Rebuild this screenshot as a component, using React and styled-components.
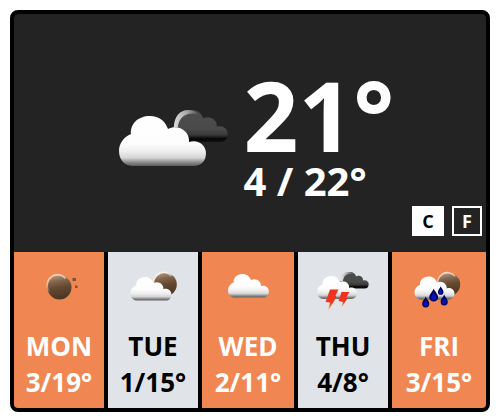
import React, { useId } from "react";
import styled, { createGlobalStyle } from "styled-components";

const GlobalStyle = createGlobalStyle`
  *, *::before, *::after { box-sizing: border-box; }
  body {
    margin: 0;
    background: #fff;
    font-family: "Open Sans", "Noto Sans", sans-serif;
    font-weight: 700;
  }
`;

const Page = styled.main`
  padding: 10px 8px 8px 10px;
`;

const Widget = styled.article`
  border: 4px solid #000;
  border-radius: 8px;
  background: #000;
  overflow: hidden;
`;

const Today = styled.section`
  display: flex;
  flex-direction: column;
  padding: 60px 4px 16px;
  background: #232323;
  color: #fff;
  border-radius: 4px 4px 0 0;
`;

const Current = styled.div`
  display: flex;
  justify-content: center;
  gap: 14px;
  padding-left: 12px;
`;

const CurrentIcon = styled.svg`
  width: 112px;
  height: 64px;
  margin-top: 32px;
  flex: none;
`;

const Temperature = styled.p`
  margin: 0;
  font-size: 96px;
  line-height: 82px;
`;

const Range = styled.p`
  margin: 0;
  font-size: 40px;
  line-height: 50px;
`;

const Units = styled.div`
  display: flex;
  justify-content: flex-end;
  gap: 8px;
`;

const UnitButton = styled.button`
  width: ${(p) => (p.$active ? 32 : 30)}px;
  height: 30px;
  padding: 0;
  border: 2px solid #fff;
  background: ${(p) => (p.$active ? "#fff" : "transparent")};
  color: ${(p) => (p.$active ? "#000" : "#fff")};
  font: inherit;
  font-size: 18px;
  line-height: 24px;
  cursor: pointer;
`;

const Forecast = styled.ul`
  display: grid;
  grid-template-columns: 90fr 90fr 92fr 90fr 94fr;
  gap: 4px;
  margin: 0;
  padding: 0;
  list-style: none;
`;

const Day = styled.li`
  display: flex;
  flex-direction: column;
  align-items: center;
  padding: 14px 0 8px;
  background: ${(p) => (p.$warm ? "#f08752" : "#e0e3e8")};
  color: ${(p) => (p.$warm ? "#fff" : "#000")};
  font-size: 26px;
  line-height: 36px;
  white-space: nowrap;
`;

const DayIcon = styled.svg`
  width: 60px;
  height: 50px;
  margin-bottom: 12px;
`;

const CLOUD =
  "M14 50C6 50 0 44 0 35C0 27 5 21 12 18C11 8 19 0 31 0C40 0 46 5 49 13C59 8 71 15 70 26C79 23 87 29 87 37C87 45 82 50 75 50Z";

function Cloud({ x, y, scale }) {
  const id = useId();
  return (
    <g transform={`translate(${x} ${y}) scale(${scale})`}>
      <linearGradient id={id} x1="0" y1="0" x2="0" y2="1">
        <stop offset="0" stopColor="#fff" />
        <stop offset="0.55" stopColor="#fdfdfd" />
        <stop offset="0.72" stopColor="#ececec" />
        <stop offset="0.84" stopColor="#d4d4d4" />
        <stop offset="0.92" stopColor="#909090" />
        <stop offset="1" stopColor="#5c5c5c" />
      </linearGradient>
      <path d={CLOUD} fill={`url(#${id})`} />
    </g>
  );
}

function DarkCloud({ x, y, scale }) {
  const id = useId();
  return (
    <g transform={`translate(${x} ${y}) scale(${scale})`}>
      <linearGradient id={id} x1="0" y1="0" x2="0" y2="1">
        <stop offset="0" stopColor="#4d4d4d" />
        <stop offset="0.6" stopColor="#4a4a4a" />
        <stop offset="0.78" stopColor="#383838" />
        <stop offset="0.9" stopColor="#050505" />
        <stop offset="1" stopColor="#111" />
      </linearGradient>
      <linearGradient id={`${id}-rim`} x1="0" y1="0" x2="1" y2="0">
        <stop offset="0" stopColor="#ddd" />
        <stop offset="0.5" stopColor="#aaa" />
        <stop offset="1" stopColor="#555" />
      </linearGradient>
      <path d={CLOUD} fill={`url(#${id})`} />
      <path
        d="M3 27C3 10 13 0 25 0C32 0 37 2 41 7C25 2 11 10 9 27Z"
        fill={`url(#${id}-rim)`}
      />
    </g>
  );
}

function Moon({ cx, cy, r }) {
  const id = useId();
  return (
    <g>
      <linearGradient id={id} x1="0.35" y1="0" x2="0.55" y2="1">
        <stop offset="0" stopColor="#b0957e" />
        <stop offset="0.25" stopColor="#80644d" />
        <stop offset="0.5" stopColor="#65492f" />
        <stop offset="1" stopColor="#4b3424" />
      </linearGradient>
      <linearGradient id={`${id}-rim`} x1="0.3" y1="0" x2="0.5" y2="1">
        <stop offset="0" stopColor="#fff3e6" stopOpacity="0.8" />
        <stop offset="1" stopColor="#fff3e6" stopOpacity="0.1" />
      </linearGradient>
      <circle cx={cx} cy={cy} r={r} fill={`url(#${id})`} />
      <path
        d={`M${cx - r + 2} ${cy + 4}A${r - 2} ${r - 2} 0 0 1 ${cx + 6} ${cy - r + 3}`}
        fill="none"
        stroke={`url(#${id}-rim)`}
        strokeWidth="1.6"
      />
    </g>
  );
}

function Bolt({ points }) {
  const id = useId();
  return (
    <g>
      <linearGradient id={id} x1="0" y1="0" x2="0" y2="1">
        <stop offset="0" stopColor="#f0311f" />
        <stop offset="0.62" stopColor="#ee3820" />
        <stop offset="0.82" stopColor="#f08a35" />
        <stop offset="1" stopColor="#f7d48a" />
      </linearGradient>
      <polygon points={points} fill={`url(#${id})`} />
    </g>
  );
}

function Drop({ x, y, scale }) {
  return (
    <g transform={`translate(${x} ${y}) scale(${scale})`}>
      <path d="M0 -6C1 -3 4 -1 4 2A4 4 0 0 1 -4 2C-4 -1 -1 -3 0 -6Z" fill="#00005e" />
      <path d="M0 -2C1 0 2.4 1 2.4 2.6A2.4 2.4 0 0 1 -2.4 2.6C-2.4 1 -1 0 0 -2Z" fill="#0713b5" />
    </g>
  );
}

const ICONS = {
  clear: (
    <>
      <Moon cx={30.5} cy={21.5} r={12} />
      <path d="M43.5 12H47V15H43.5ZM46 19.5H48.5V22H46Z" fill="#805239" />
    </>
  ),
  partlyCloudy: (
    <>
      <Moon cx={42.3} cy={18.5} r={11.5} />
      <Cloud x={7.5} y={11} scale={0.47} />
    </>
  ),
  cloudy: <Cloud x={10} y={8} scale={0.47} />,
  storm: (
    <>
      <DarkCloud x={27} y={6} scale={0.33} />
      <Cloud x={4} y={10} scale={0.46} />
      <Bolt points="17,23.5 25.5,23.5 22.5,29.5 23.5,31 15,45 17,36.5 12.5,36" />
      <Bolt points="28.5,26 36.5,26 33.5,31 34.5,32.5 28,42 30,36 25.5,35" />
    </>
  ),
  rain: (
    <>
      <Moon cx={40} cy={18.5} r={11.2} />
      <Cloud x={5.5} y={10.5} scale={0.46} />
      <Drop x={24.7} y={29} scale={1.1} />
      <Drop x={16.7} y={36} scale={0.9} />
      <Drop x={31.7} y={24.5} scale={0.7} />
      <Drop x={35.2} y={34} scale={0.9} />
    </>
  ),
};

const DAYS = [
  { name: "MON", range: "3/19°", icon: "clear", warm: true },
  { name: "TUE", range: "1/15°", icon: "partlyCloudy", warm: false },
  { name: "WED", range: "2/11°", icon: "cloudy", warm: true },
  { name: "THU", range: "4/8°", icon: "storm", warm: false },
  { name: "FRI", range: "3/15°", icon: "rain", warm: true },
];

export default function App() {
  return (
    <>
      <GlobalStyle />
      <Page>
        <Widget>
          <Today>
            <Current>
              <CurrentIcon viewBox="0 0 112 64" aria-hidden="true">
                <DarkCloud x={54} y={4} scale={0.64} />
                <Cloud x={1} y={10} scale={1} />
              </CurrentIcon>
              <div>
                <Temperature>21°</Temperature>
                <Range>4 / 22°</Range>
              </div>
            </Current>
            <Units>
              <UnitButton type="button" $active aria-pressed="true">C</UnitButton>
              <UnitButton type="button" aria-pressed="false">F</UnitButton>
            </Units>
          </Today>
          <Forecast>
            {DAYS.map((day) => (
              <Day key={day.name} $warm={day.warm}>
                <DayIcon viewBox="0 0 60 50" aria-hidden="true">
                  {ICONS[day.icon]}
                </DayIcon>
                <span>{day.name}</span>
                <span>{day.range}</span>
              </Day>
            ))}
          </Forecast>
        </Widget>
      </Page>
    </>
  );
}
